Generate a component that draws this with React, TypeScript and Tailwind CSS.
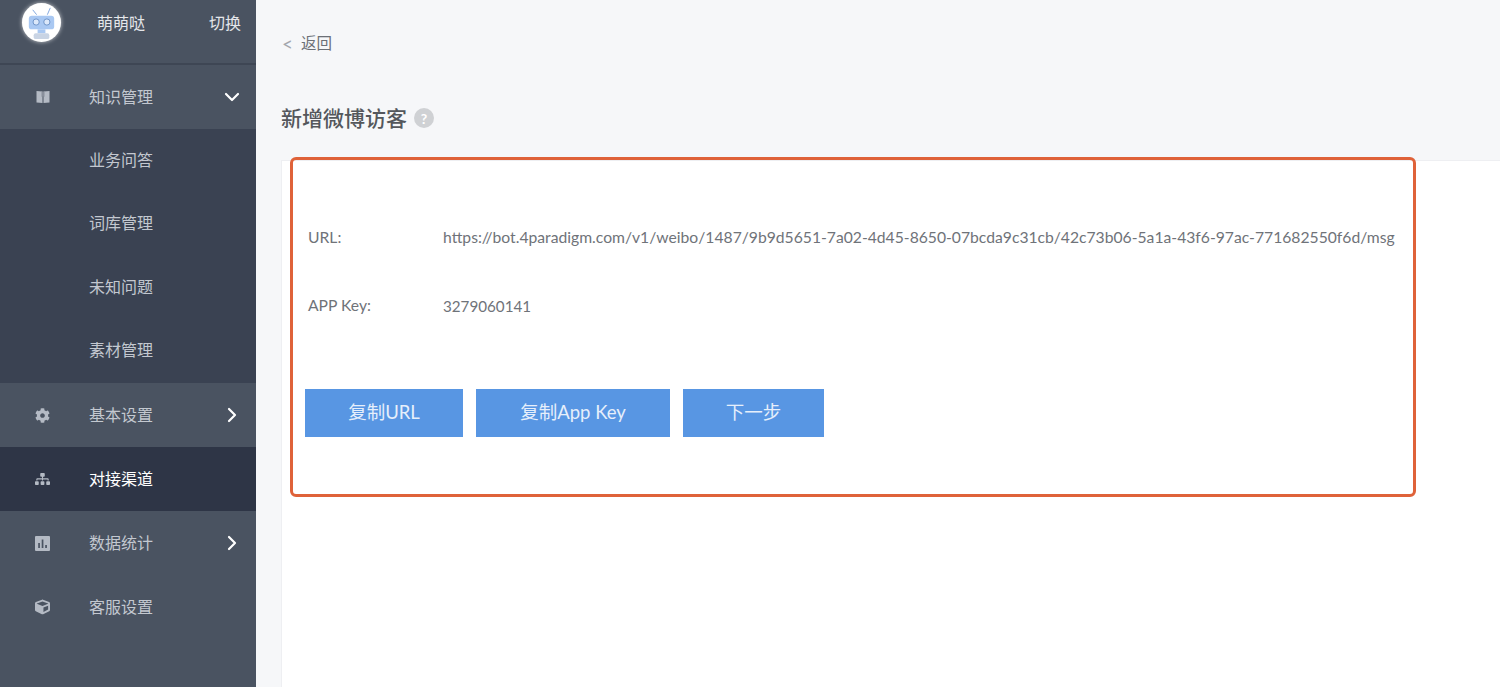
import React from "react";
import { FaCog, FaSitemap, FaCube } from "react-icons/fa";
import { ChevronDown, ChevronRight } from "lucide-react";

const CN = "font-['Lato','Noto_Sans_CJK_SC',sans-serif]";

function BookIcon() {
  return (
    <svg width="14" height="14" viewBox="0 0 14 14" className="text-[#b4bac4]">
      <path d="M0.5 1 L6.5 1.5 V13 L0.5 12.5 Z M7.5 1.5 L13.5 1 V12.5 L7.5 13 Z" fill="currentColor" />
      <path d="M5 1.5 h4 v5.5 l-2 -1 l-2 1 z" fill="#8f96a2" opacity="0.6" />
    </svg>
  );
}

function StatIcon() {
  return (
    <svg width="15" height="15" viewBox="0 0 15 15" className="text-[#b4bac4]">
      <rect width="15" height="15" rx="1" fill="currentColor" />
      <rect x="3.2" y="7" width="1.7" height="5" fill="#4a5361" />
      <rect x="6.7" y="3.5" width="1.7" height="8.5" fill="#4a5361" />
      <rect x="10.2" y="9" width="1.7" height="3" fill="#4a5361" />
    </svg>
  );
}

function Robot() {
  return (
    <svg viewBox="0 0 40 40" className="w-[39px] h-[39px] rounded-full bg-white shadow-[0_0_4px_rgba(255,255,255,0.7)]">
      <path d="M11 7 L15 12 M29 5 L26 12" stroke="#7fa6de" strokeWidth="1" />
      <rect x="7" y="13" width="26" height="14" rx="3" fill="#a9c8f2" />
      <circle cx="14.5" cy="19.5" r="3.2" fill="#dbe8fa" stroke="#6f94c9" strokeWidth="1" />
      <circle cx="25.5" cy="19.5" r="3.2" fill="#dbe8fa" stroke="#6f94c9" strokeWidth="1" />
      <rect x="16" y="27" width="8" height="4" fill="#a9c8f2" />
      <rect x="12" y="31" width="16" height="6" rx="2" fill="#c9d4e4" />
    </svg>
  );
}

type ItemProps = { icon: React.ReactNode; label: string; arrow?: "down" | "right"; active?: boolean };

function Item({ icon, label, arrow, active }: ItemProps) {
  return (
    <div className={`h-16 flex items-center ${active ? "bg-[#2e3546] text-white" : "text-[#c3c8d0]"}`}>
      <div className="w-[85px] pl-[35px] flex items-center shrink-0 text-[#b4bac4]">
        <div className="w-[15px] flex justify-center">{icon}</div>
      </div>
      <span className="ml-1 text-[16px] flex-1">{label}</span>
      {arrow === "down" && <ChevronDown size={24} strokeWidth={2.2} className="text-white mr-[12px]" />}
      {arrow === "right" && <ChevronRight size={24} strokeWidth={2.2} className="text-white mr-[12px]" />}
    </div>
  );
}

function Sub({ label }: { label: string }) {
  return (
    <div className="h-[63.5px] flex items-center pl-[89px] pb-[2px] text-[16px] text-[#c3c8d0]">{label}</div>
  );
}

function Btn({ w, label }: { w: string; label: string }) {
  return (
    <button className={`${w} h-12 bg-[#5896e3] text-[#e6effb] text-[18.5px] flex items-center justify-center`}>
      {label}
    </button>
  );
}

export default function App() {
  return (
    <div className={`${CN} w-[1500px] h-[687px] overflow-hidden flex bg-[#f6f7f9] relative`}>
      <aside className="w-[256px] shrink-0 bg-[#4a5361] flex flex-col">
        <div className="h-[65px] border-b-2 border-[#3e4654] flex items-start pl-[22px] pr-[15px] pt-[11px] text-[#e4e6ea] text-[16px]">
          <div className="-mt-[8px]"><Robot /></div>
          <span className="ml-[36px] flex-1">萌萌哒</span>
          <span>切换</span>
        </div>
        <Item icon={<BookIcon />} label="知识管理" arrow="down" />
        <div className="bg-[#3a4252]">
          <Sub label="业务问答" />
          <Sub label="词库管理" />
          <Sub label="未知问题" />
          <Sub label="素材管理" />
        </div>
        <Item icon={<FaCog size={15} />} label="基本设置" arrow="right" />
        <Item icon={<FaSitemap size={16} />} label="对接渠道" active />
        <Item icon={<StatIcon />} label="数据统计" arrow="right" />
        <Item icon={<FaCube size={16} />} label="客服设置" />
      </aside>

      <main className="flex-1 flex flex-col pl-[25px] min-w-0">
        <div className="pt-[33px] flex items-center h-[55px] text-[15.5px] text-[#6b6f76]">
          <span className="text-[#a3a7ad] text-[19px] mr-[8px] ml-[1px]">&lt;</span>
          <span>返回</span>
        </div>
        <div className="mt-[36px] flex items-center h-[54px]">
          <span className="text-[21px] text-[#54575c] font-medium">新增微博访客</span>
          <span className="ml-[7px] w-[20px] h-[20px] rounded-full bg-[#cfd1d4] text-white text-[14px] font-bold flex items-center justify-center">?</span>
        </div>
        <div className="flex-1 mt-[15px] bg-white border-l border-t border-[#eeeff2] pl-[23px] pt-[64px] text-[15.7px] text-[#6f7379]">
          <div className="flex items-center h-[26px] pl-[3px]">
            <span className="w-[135px]">URL:</span>
            <span className="whitespace-nowrap">https://bot.4paradigm.com/v1/weibo/1487/9b9d5651-7a02-4d45-8650-07bcda9c31cb/42c73b06-5a1a-43f6-97ac-771682550f6d/msg</span>
          </div>
          <div className="flex items-center h-[26px] mt-[42px] pl-[3px]">
            <span className="w-[135px]">APP Key:</span>
            <span className="text-[15.2px]">3279060141</span>
          </div>
          <div className="flex gap-[13px] mt-[70px]">
            <Btn w="w-[158px]" label="复制URL" />
            <Btn w="w-[194px]" label="复制App Key" />
            <Btn w="w-[141px]" label="下一步" />
          </div>
        </div>
      </main>

      <div className="absolute left-[290px] top-[157px] w-[1126px] h-[340px] border-[3.5px] border-[#df6239] rounded-[6px] pointer-events-none" />
    </div>
  );
}
